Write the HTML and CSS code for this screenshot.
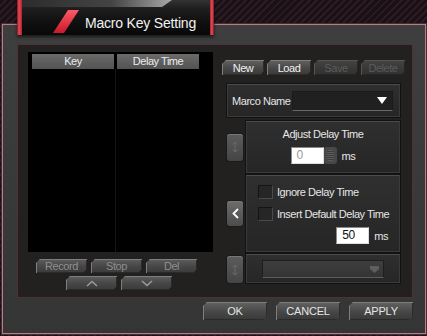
FILE: index.html
```html
<!DOCTYPE html>
<html lang="en">
<head>
  <meta charset="UTF-8">
  <title>Macro Key Setting</title>
  <link rel="stylesheet" href="styles.css">
</head>
<body>
  <!-- Title tab sits over the frame's top edge -->
  <div class="title-tab">
    <span class="slash"></span>
    <h1>Macro Key Setting</h1>
  </div>

  <div class="frame">
    <div class="inner">

      <!-- Recorded key list -->
      <div class="list-col">
        <div class="list">
          <div class="list-head">
            <div class="head-cell">Key</div>
            <div class="head-cell">Delay Time</div>
          </div>
          <div class="list-body">
            <div class="col-key"></div>
            <div class="col-delay"></div>
          </div>
        </div>
        <div class="btn-row record-row">
          <button class="bevel btn-dim">Record</button>
          <button class="bevel btn-dim">Stop</button>
          <button class="bevel btn-dim">Del</button>
        </div>
        <div class="btn-row arrow-row">
          <button class="bevel btn-dim">
            <svg width="12" height="7" viewBox="0 0 12 7"><polyline points="1,6 6,1.5 11,6" fill="none" stroke="#9a9a9a" stroke-width="1.6"/></svg>
          </button>
          <button class="bevel btn-dim">
            <svg width="12" height="7" viewBox="0 0 12 7"><polyline points="1,1 6,5.5 11,1" fill="none" stroke="#9a9a9a" stroke-width="1.6"/></svg>
          </button>
        </div>
      </div>

      <!-- Macro options -->
      <div class="side">
        <div class="toolbar">
          <button class="bevel tool w42">New</button>
          <button class="bevel tool">Load</button>
          <button class="bevel tool disabled">Save</button>
          <button class="bevel tool disabled">Delete</button>
        </div>

        <div class="box name-box">
          <span class="label">Marco Name</span>
          <div class="select">
            <svg width="10" height="7" viewBox="0 0 10 7"><polygon points="0,0 10,0 5,7" fill="#fff"/></svg>
          </div>
        </div>

        <div class="opt-row first">
          <button class="side-btn off">
            <svg width="8" height="12" viewBox="0 0 8 12"><path d="M4 1v10M1.5 3.5L4 1l2.5 2.5M1.5 8.5L4 11l2.5-2.5" fill="none" stroke="#6a6a6a" stroke-width="1"/></svg>
          </button>
          <div class="box adjust-box">
            <div class="box-title">Adjust Delay Time</div>
            <div class="field-row">
              <div class="num muted">0</div>
              <div class="spin"><span></span></div>
              <span class="unit">ms</span>
            </div>
          </div>
        </div>

        <div class="opt-row">
          <button class="side-btn on">
            <svg width="7" height="11" viewBox="0 0 7 11"><polyline points="6,1 1.5,5.5 6,10" fill="none" stroke="#fff" stroke-width="1.8"/></svg>
          </button>
          <div class="box check-box">
            <div class="check-row"><span class="check"></span>Ignore Delay Time</div>
            <div class="check-row second"><span class="check"></span>Insert Default Delay Time</div>
            <div class="field-row right">
              <div class="num">50</div>
              <span class="unit">ms</span>
            </div>
          </div>
        </div>

        <div class="opt-row last">
          <button class="side-btn off">
            <svg width="8" height="12" viewBox="0 0 8 12"><path d="M4 1v10M1.5 3.5L4 1l2.5 2.5M1.5 8.5L4 11l2.5-2.5" fill="none" stroke="#6a6a6a" stroke-width="1"/></svg>
          </button>
          <div class="box pick-box">
            <div class="pick">
              <svg width="9" height="7" viewBox="0 0 9 7"><path d="M0 0h9v3L4.5 7 0 3z" fill="#5e5e5e"/></svg>
            </div>
          </div>
        </div>
      </div>
    </div>

    <div class="footer">
      <button class="bevel big">OK</button>
      <button class="bevel big">CANCEL</button>
      <button class="bevel big">APPLY</button>
    </div>
  </div>
</body>
</html>
```

FILE: styles.css
```css
body {
  margin: 0;
  width: 427px;
  height: 336px;
  overflow: hidden;
  position: relative;
  box-sizing: border-box;
  padding-top: 24px;
  font-family: "Liberation Sans", Arial, sans-serif;
  font-size: 11px;
  letter-spacing: -0.45px;
  color: #e6e6e6;
  background: #1a1016 repeating-linear-gradient(135deg, #1b1016 0 3px, #2b1c24 3px 5px);
}
button {
  border: none;
  padding: 0;
  font: inherit;
  letter-spacing: inherit;
  cursor: pointer;
  display: flex;
  align-items: center;
  justify-content: center;
}

/* title tab */
.title-tab {
  position: absolute;
  left: 17px;
  top: 0;
  width: 197px;
  height: 35px;
  z-index: 2;
  background:
    linear-gradient(to right, #7a1620 0, #e84a58 2px, #b21f2c 5px, transparent 5px, transparent calc(100% - 4px), #b21f2c calc(100% - 4px), #e2505c calc(100% - 2px), #7a1620 100%),
    linear-gradient(#333 0, #1e1e1e 25%, #111 60%, #080808 100%);
  box-shadow: 0 2px 3px rgba(0,0,0,0.6);
}
.title-tab::before {
  content: "";
  position: absolute;
  left: 5px;
  top: 0;
  width: 150px;
  height: 7px;
  background: linear-gradient(to right, #2c2c2c, #444 60%, #a8a8a8);
  clip-path: polygon(0 0, 100% 0, calc(100% - 10px) 100%, 0 100%);
}
.slash {
  position: absolute;
  left: 36px;
  top: 10px;
  width: 26px;
  height: 23px;
  background: linear-gradient(#ff5a68, #c8182a);
  clip-path: polygon(15px 0, 26px 0, 11px 100%, 0 100%);
}
.title-tab h1 {
  margin: 0 0 0 68px;
  padding-top: 15px;
  font-size: 14px;
  line-height: 16px;
  font-weight: normal;
  letter-spacing: -0.2px;
  color: #f2f2f2;
}

/* main frame */
.frame {
  margin-left: 2px;
  width: 424px;
  height: 310px;
  box-sizing: border-box;
  border: 1px solid #b57d86;
  box-shadow: 0 0 0 1px #4a2c33;
  background: linear-gradient(#3e3e3e, #353535);
  padding: 19px 12px 0 14px;
  display: flex;
  flex-direction: column;
}
.inner {
  width: 396px;
  height: 254px;
  box-sizing: border-box;
  border: 1px solid #4e3237;
  background: #222120;
  padding: 7px 0 0 10px;
  display: flex;
  align-items: flex-start;
}

/* key list */
.list-col {
  display: flex;
  flex-direction: column;
}
.list {
  width: 185px;
  height: 200px;
  background: #000;
  display: flex;
  flex-direction: column;
}
.list-head {
  display: flex;
  gap: 3px;
  padding: 2px 0 0 4px;
}
.head-cell {
  width: 82px;
  height: 15px;
  line-height: 15px;
  text-align: center;
  color: #ececec;
  background: linear-gradient(#6a6a6a, #535353);
}
.list-body {
  flex: 1;
  display: flex;
}
.col-key {
  width: 87px;
  border-right: 1px solid #161616;
}
.btn-row {
  display: flex;
  gap: 4px;
}
.btn-row .bevel {
  width: 51px;
  height: 14px;
}
.record-row {
  margin: 7px 0 0 8px;
}
.arrow-row {
  margin: 3px 0 0 38px;
}

/* chamfered buttons */
.bevel {
  clip-path: polygon(4px 0, 100% 0, 100% calc(100% - 4px), calc(100% - 4px) 100%, 0 100%, 0 4px);
  background: linear-gradient(#636363, #474747 55%, #393939);
  box-shadow: inset 1px 1px 0 #7e7e7e, inset -1px -1px 0 #2a2a2a;
  color: #f2f2f2;
}
.btn-dim {
  color: #8e8e8e;
  background: linear-gradient(#5e5e5e, #464646 55%, #3a3a3a);
}
.bevel.disabled {
  color: #5c5c5c;
  background: linear-gradient(#444, #383838 55%, #313131);
  box-shadow: inset 1px 1px 0 #555, inset -1px -1px 0 #252525;
}
.big {
  width: 64px;
  height: 18px;
  color: #e6e6e6;
  letter-spacing: -0.2px;
}

/* right column */
.side {
  width: 183px;
  margin: 8px 0 0 9px;
  display: flex;
  flex-direction: column;
}
.toolbar {
  display: flex;
  gap: 3px;
}
.tool {
  width: 44px;
  height: 15px;
}
.tool.w42 {
  width: 42px;
}
.box {
  box-sizing: border-box;
  background: linear-gradient(#2f2f2f, #262626);
  border: 1px solid #3a3a3a;
  border-top-color: #4c4c4c;
  box-shadow: 0 0 0 1px #121212;
}
.name-box {
  width: 173px;
  height: 33px;
  margin: 9px 0 0 5px;
  padding: 0 6px 0 4px;
  display: flex;
  align-items: center;
}
.select {
  margin-left: auto;
  width: 101px;
  height: 20px;
  box-sizing: border-box;
  background: #202020;
  border: 1px solid #1a1a1a;
  border-bottom-color: #6a6a6a;
  display: flex;
  align-items: center;
  justify-content: flex-end;
  padding-right: 5px;
}
.opt-row {
  display: flex;
  align-items: center;
  gap: 3px;
  margin: 2px 0 0 5px;
}
.opt-row.first {
  margin-top: 4px;
}
.side-btn {
  width: 16px;
  height: 27px;
  border-radius: 3px;
  background: linear-gradient(#5c5c5c, #454545);
  box-shadow: inset 0 1px 0 #777, 0 0 0 1px #1a1a1a;
}
.side-btn.on {
  height: 25px;
  background: linear-gradient(#6c6c6c, #4c4c4c);
}
.opt-row.last .side-btn {
  align-self: flex-end;
}
.adjust-box {
  width: 154px;
  height: 52px;
  display: flex;
  flex-direction: column;
  align-items: center;
  padding-top: 5px;
}
.box-title {
  line-height: 14px;
}
.field-row {
  display: flex;
  align-items: center;
  margin-top: 6px;
}
.num {
  width: 33px;
  height: 17px;
  box-sizing: border-box;
  background: #fff;
  border: 1px solid #8a8a8a;
  border-right-color: #ddd;
  border-bottom-color: #ddd;
  color: #111;
  line-height: 15px;
  padding-left: 5px;
  font-size: 12px;
}
.num.muted {
  color: #9a9a9a;
}
.spin {
  width: 13px;
  height: 17px;
  border-radius: 3px;
  background: #484848;
  display: flex;
  align-items: center;
  justify-content: center;
}
.spin span {
  width: 7px;
  height: 11px;
  border-radius: 3px;
  background: repeating-linear-gradient(#5e5e5e 0 1px, #3c3c3c 1px 2px);
}
.unit {
  margin-left: 5px;
  font-size: 11px;
}
.check-box {
  width: 154px;
  height: 77px;
  padding: 9px 0 0 11px;
}
.check-row {
  display: flex;
  align-items: center;
  height: 14px;
}
.check-row.second {
  margin-top: 8px;
}
.check {
  width: 15px;
  height: 14px;
  box-sizing: border-box;
  margin-right: 4px;
  background: #262626;
  border: 1px solid #141414;
  border-right-color: #4a4a4a;
  border-bottom-color: #4a4a4a;
}
.field-row.right {
  justify-content: flex-end;
  padding-right: 11px;
}
.pick-box {
  width: 154px;
  height: 29px;
  padding: 5px 15px 0 15px;
}
.pick {
  height: 18px;
  box-sizing: border-box;
  background: linear-gradient(#3e3e3e, #343434);
  border: 1px solid #1e1e1e;
  border-bottom-color: #5c5c5c;
  display: flex;
  align-items: center;
  justify-content: flex-end;
  padding-right: 4px;
}

/* dialog buttons */
.footer {
  display: flex;
  justify-content: flex-end;
  gap: 9px;
  margin-top: 4px;
}
```
